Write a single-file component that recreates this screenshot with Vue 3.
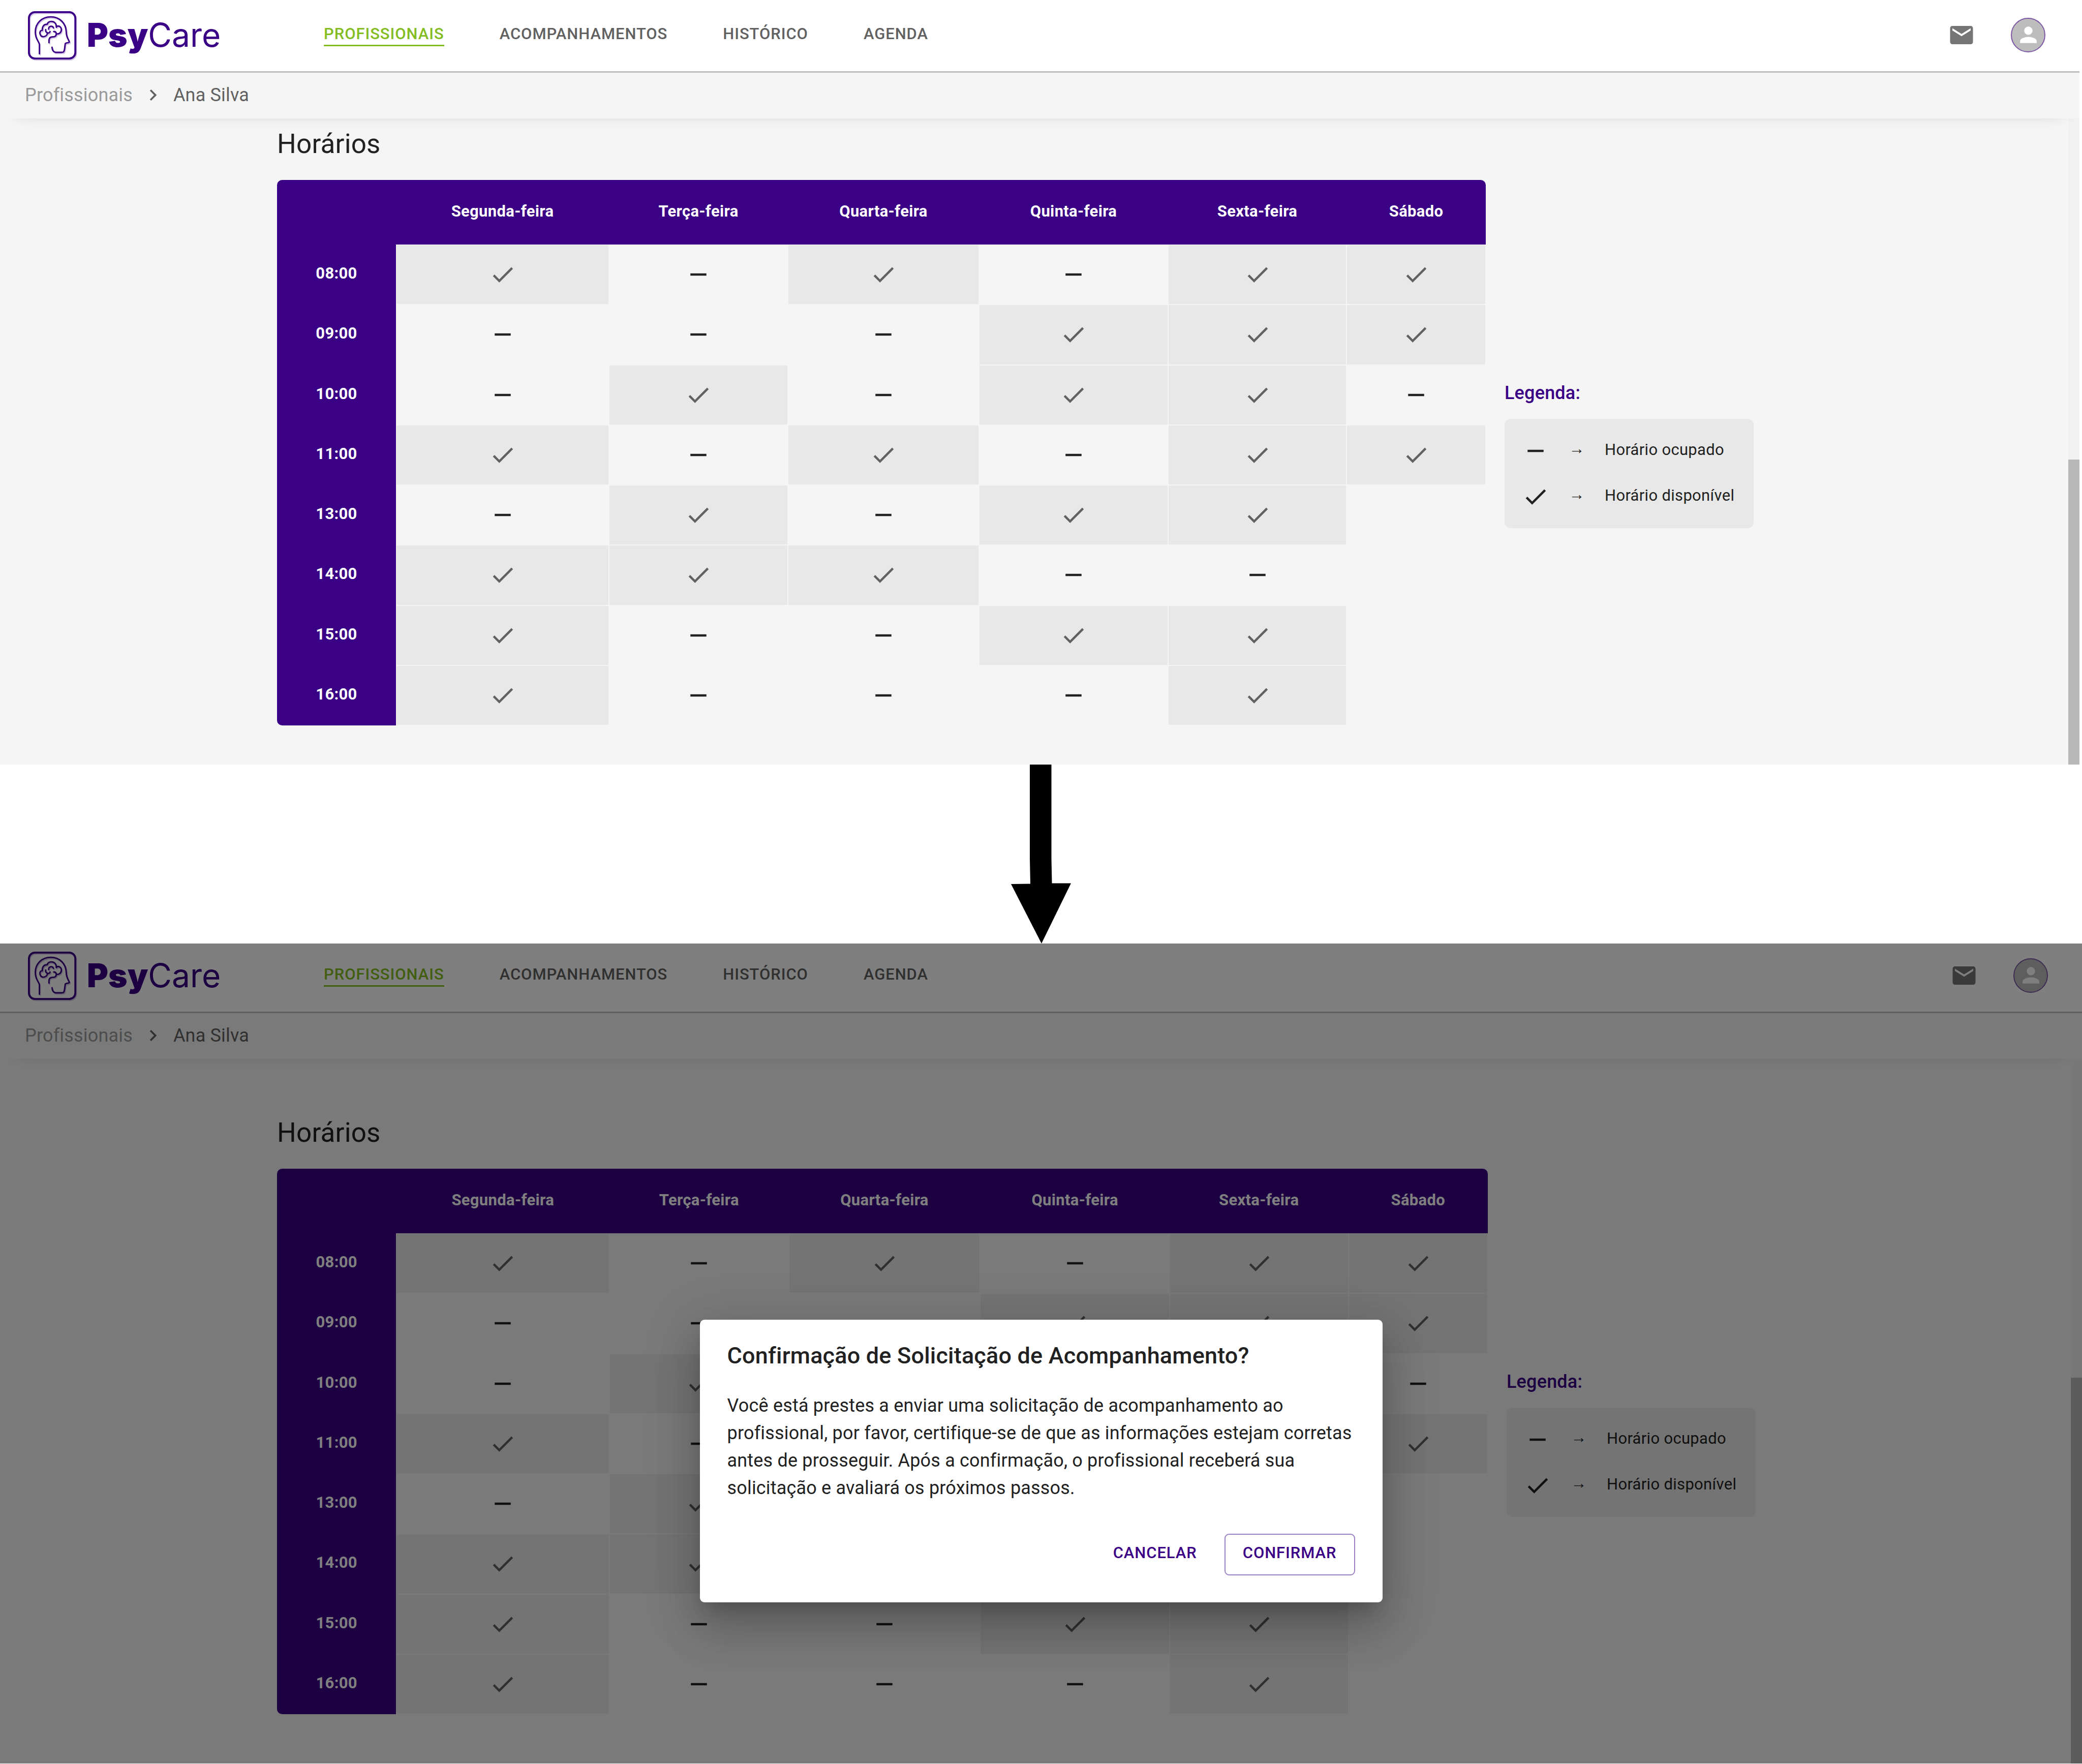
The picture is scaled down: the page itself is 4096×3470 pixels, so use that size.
<script setup>
const days = ['Segunda-feira', 'Terça-feira', 'Quarta-feira', 'Quinta-feira', 'Sexta-feira', 'Sábado']

// x = horário disponível, - = horário ocupado, espaço = sem atendimento
const schedule = [
  { hour: '08:00', slots: 'x-x-xx' },
  { hour: '09:00', slots: '---xxx' },
  { hour: '10:00', slots: '-x-xx-' },
  { hour: '11:00', slots: 'x-x-xx' },
  { hour: '13:00', slots: '-x-xx ' },
  { hour: '14:00', slots: 'xxx-- ' },
  { hour: '15:00', slots: 'x--xx ' },
  { hour: '16:00', slots: 'x---x ' },
]

const links = ['Profissionais', 'Acompanhamentos', 'Histórico', 'Agenda']
const screens = [
  { id: 'schedule', modal: false },
  { id: 'confirm', modal: true },
]
</script>

<template>
  <div class="flow">
    <template v-for="screen in screens" :key="screen.id">
      <div v-if="screen.modal" class="step">
        <svg class="step-arrow" viewBox="0 0 118 352" aria-hidden="true">
          <path d="M37 0H79.500V185L80.500 233.500L118 233.500L60 352L0 235L38 234.500L37 185Z" />
        </svg>
      </div>

      <section class="screen" :class="screen.id">
        <header class="topbar">
          <a class="brand" href="#" aria-label="PsyCare">
            <svg class="brand-mark" viewBox="0 0 450 450" fill="none" stroke-linecap="round" stroke-linejoin="round" aria-hidden="true">
              <defs>
                <g :id="screen.id + '-mark'">
                  <rect x="29" y="37" width="384" height="384" rx="50" stroke-width="16" />
                  <g stroke-width="12">
                    <path d="M116 382V304C114 282 82 262 82 202C82 128 136 76 210 76C284 76 336 130 338 202C338 244 356 262 364 284C360 294 334 288 330 298C324 322 328 348 316 366C312 370 306 370 298 370H250C232 368 222 350 220 328" />
                    <path d="M195 290V268C197 248 210 242 226 242C246 242 256 232 256 214C254 202 244 196 234 198" />
                    <path d="M256 218C282 220 298 204 298 180C296 160 280 148 260 154L256 162C258 132 240 114 214 114C196 114 184 124 180 138C156 136 138 154 140 188C124 186 118 202 120 214C124 232 136 242 152 240C168 238 182 226 182 208C170 204 166 194 168 182" />
                    <path d="M182 210C192 212 202 208 204 198" />
                    <path d="M192 178C192 148 226 148 232 168" />
                  </g>
                </g>
              </defs>
              <use class="mark-shade" :href="'#' + screen.id + '-mark'" x="6" y="9" />
              <use class="mark-line" :href="'#' + screen.id + '-mark'" />
            </svg>
            <span class="brand-name"><b>Psy</b>Care</span>
          </a>
          <nav class="menu">
            <a v-for="(link, i) in links" :key="link" href="#" :class="{ active: i === 0 }">{{ link }}</a>
          </nav>
          <div class="tools">
            <button class="icon-button" type="button" aria-label="Mensagens">
              <svg class="icon" viewBox="0 0 24 24"><path d="M20 4H4c-1.100 0-1.990.9-1.990 2L2 18c0 1.100.9 2 2 2h16c1.100 0 2-.9 2-2V6c0-1.100-.9-2-2-2zm0 4-8 5-8-5V6l8 5 8-5v2z" /></svg>
            </button>
            <button class="avatar" type="button" aria-label="Perfil">
              <svg viewBox="0 0 24 24"><path d="M12 12c2.210 0 4-1.790 4-4s-1.790-4-4-4-4 1.790-4 4 1.790 4 4 4zm0 2c-2.670 0-8 1.340-8 4v2h16v-2c0-2.660-5.330-4-8-4z" /></svg>
            </button>
          </div>
        </header>

        <nav class="crumbs" aria-label="Trilha">
          <a href="#">Profissionais</a>
          <svg viewBox="0 0 24 24" aria-hidden="true"><path d="M10 6 8.590 7.410 13.170 12l-4.580 4.590L10 18l6-6z" /></svg>
          <span>Ana Silva</span>
        </nav>

        <div class="body">
          <main class="content">
            <h2>Horários</h2>
            <div class="board">
              <table>
                <colgroup>
                  <col class="c-hour" /><col class="c-mon" /><col class="c-tue" /><col class="c-wed" />
                  <col class="c-thu" /><col class="c-fri" /><col class="c-sat" />
                </colgroup>
                <thead>
                  <tr>
                    <td class="corner"></td>
                    <th v-for="day in days" :key="day" scope="col">{{ day }}</th>
                  </tr>
                </thead>
                <tbody>
                  <tr v-for="row in schedule" :key="row.hour">
                    <th scope="row">{{ row.hour }}</th>
                    <td v-for="(slot, i) in row.slots" :key="i" :class="{ free: slot === 'x' }">
                      <svg v-if="slot === 'x'" class="icon" viewBox="0 0 24 24"><path d="M9 16.170 4.830 12l-1.420 1.410L9 19 21 7l-1.410-1.410z" /></svg>
                      <svg v-else-if="slot === '-'" class="icon" viewBox="0 0 24 24"><path d="M19 13H5v-2h14v2z" /></svg>
                    </td>
                  </tr>
                </tbody>
              </table>

              <aside class="legend">
                <h3>Legenda:</h3>
                <ul>
                  <li>
                    <svg class="icon" viewBox="0 0 24 24"><path d="M19 13H5v-2h14v2z" /></svg>
                    <span class="to">→</span>
                    <span>Horário ocupado</span>
                  </li>
                  <li>
                    <svg class="icon" viewBox="0 0 24 24"><path d="M9 16.170 4.830 12l-1.420 1.410L9 19 21 7l-1.410-1.410z" /></svg>
                    <span class="to">→</span>
                    <span>Horário disponível</span>
                  </li>
                </ul>
              </aside>
            </div>
          </main>
          <div class="scrollbar"><div class="thumb"></div></div>
        </div>

        <div v-if="screen.modal" class="overlay">
          <div class="dialog" role="dialog" aria-labelledby="dialog-title">
            <h2 id="dialog-title">Confirmação de Solicitação de Acompanhamento?</h2>
            <p>
              Você está prestes a enviar uma solicitação de acompanhamento ao profissional, por favor,
              certifique-se de que as informações estejam corretas antes de prosseguir. Após a confirmação,
              o profissional receberá sua solicitação e avaliará os próximos passos.
            </p>
            <div class="actions">
              <button type="button" class="btn">Cancelar</button>
              <button type="button" class="btn outlined">Confirmar</button>
            </div>
          </div>
        </div>
      </section>
    </template>
  </div>
</template>

<style>
body {
  margin: 0;
  background: #fff;
}
</style>

<style scoped>
.flow {
  font-family: Roboto, "Liberation Sans", sans-serif;
  font-size: 36px;
  letter-spacing: 0.005em;
  color: #212121;
}

h2,
h3,
p,
ul {
  margin: 0;
  padding: 0;
}

a {
  color: inherit;
  text-decoration: none;
}

button {
  font: inherit;
  letter-spacing: inherit;
  color: inherit;
  background: none;
  border: 0;
  padding: 0;
}

svg {
  display: block;
  fill: currentColor;
}

.icon {
  width: 54px;
  height: 54px;
}

.step {
  display: flex;
  justify-content: center;
}

.step-arrow {
  width: 118px;
  height: 352px;
  fill: #000;
}

.screen {
  position: relative;
  overflow: hidden;
  background: #f5f5f5;
}

.schedule {
  margin-right: 5px;
}

.confirm {
  margin-bottom: 1px;
}

/* Barra superior */
.topbar {
  box-sizing: border-box;
  height: 143px;
  padding: 0 67px 3px 50px;
  display: flex;
  align-items: center;
  background: #fff;
  border-bottom: 3px solid #bdbdbd;
}

.confirm .topbar {
  margin-top: -6px;
}

.brand {
  flex: 0 0 587px;
  display: flex;
  align-items: center;
  gap: 14px;
  color: #3a0085;
}

.brand-mark {
  width: 107px;
  height: 107px;
  fill: none;
}

.mark-line {
  stroke: #3a0085;
}

.mark-shade {
  stroke: #d3c4e6;
}

.brand-name {
  font-family: Inter, "Open Sans", sans-serif;
  font-size: 64px;
  line-height: 80px;
  letter-spacing: 0;
}

.brand-name b {
  font-weight: 900;
}

.menu {
  flex: 1;
  display: flex;
  gap: 109px;
  font-size: 31px;
  font-weight: 500;
  line-height: 40px;
  letter-spacing: 0.03em;
  text-transform: uppercase;
  color: #616161;
}

.menu a {
  padding-bottom: 1px;
  border-bottom: 3px solid transparent;
}

.menu .active {
  color: #84bd22;
  border-color: #84bd22;
}

.tools {
  display: flex;
  align-items: center;
  gap: 70px;
}

.icon-button {
  color: #757575;
}

.avatar {
  box-sizing: border-box;
  width: 68px;
  height: 68px;
  display: flex;
  align-items: center;
  justify-content: center;
  border: 2px solid #7b57a6;
  border-radius: 50%;
  background: #bdbdbd;
  color: #fff;
}

.avatar svg {
  width: 49px;
  height: 49px;
}

/* Trilha de navegação */
.crumbs {
  position: relative;
  z-index: 1;
  box-sizing: border-box;
  height: 90px;
  padding: 0 49px 3px;
  display: flex;
  align-items: center;
  gap: 18px;
  background: #f5f5f5;
  color: #616161;
  box-shadow: 0 21px 32px -32px rgba(0, 0, 0, 0.22);
}

.crumbs a {
  color: #9a9a9a;
}

.crumbs svg {
  width: 44px;
  height: 44px;
}

/* Conteúdo */
.body {
  display: flex;
}

.content {
  flex: 1;
  padding: 20px 0 76px 545px;
}

.confirm .content {
  padding: 115px 0 97px 545px;
}

.content h2 {
  font-size: 53px;
  font-weight: 400;
  line-height: 60px;
  margin-bottom: 41px;
}

.board {
  display: flex;
  align-items: center;
  gap: 37px;
}

table {
  flex: 0 0 2378px;
  height: 1073px;
  table-layout: fixed;
  border-collapse: separate;
  border-spacing: 0;
  font-size: 31px;
  letter-spacing: 0.01em;
}

.confirm table {
  flex-basis: 2382px;
}

.c-hour { width: 234px; }
.c-mon { width: 419px; }
.c-tue { width: 352px; }
.c-wed { width: 376px; }
.c-thu { width: 372px; }
.c-fri { width: 351px; }
.c-sat { width: 274px; }

thead th,
.corner {
  height: 127px;
  padding: 0 0 4px;
  box-sizing: border-box;
}

th,
.corner {
  background: #3a0085;
  color: #fff;
  font-weight: 700;
  text-align: center;
}

.corner {
  border-top-left-radius: 10px;
}

thead th:last-child {
  border-top-right-radius: 10px;
}

tbody tr:last-child th {
  border-bottom-left-radius: 10px;
}

tbody th {
  padding: 0 0 5px;
}

tbody td {
  padding: 0;
  border: 1px solid #f5f5f5;
}

tbody td .icon {
  margin: 0 auto;
}

.free {
  background: #e8e8e8;
  color: #616161;
}

.legend {
  padding-top: 4px;
}

.legend h3 {
  font-size: 36px;
  font-weight: 500;
  line-height: 54px;
  margin-bottom: 24px;
  color: #3a0085;
}

.legend ul {
  box-sizing: border-box;
  width: 490px;
  height: 215px;
  padding: 18px 34px 0;
  list-style: none;
  border-radius: 12px;
  background: #e8e8e8;
  font-size: 31px;
  letter-spacing: 0.01em;
}

.legend li {
  display: flex;
  align-items: center;
  height: 90px;
}

.legend li span {
  padding-bottom: 5px;
}

.legend .to {
  width: 109px;
  padding-bottom: 9px;
  text-align: center;
}

/* Barra de rolagem */
.scrollbar {
  flex: 0 0 22px;
  background: #f1f1f1;
}

.thumb {
  height: 600px;
  margin-top: 671px;
  background: #b8b8b8;
}

.confirm .thumb {
  height: 759px;
  margin-top: 627px;
}

/* Confirmação */
.overlay {
  position: absolute;
  inset: 0;
  z-index: 2;
  padding-top: 740px;
  display: flex;
  justify-content: center;
  align-items: flex-start;
  background: rgba(0, 0, 0, 0.5);
}

.dialog {
  box-sizing: border-box;
  width: 1343px;
  padding: 36px 54px 53px;
  border-radius: 9px;
  background: #fff;
  box-shadow:
    0 24px 33px -16px rgba(0, 0, 0, 0.2),
    0 53px 84px 7px rgba(0, 0, 0, 0.14),
    0 20px 102px 18px rgba(0, 0, 0, 0.12);
}

.dialog h2 {
  font-size: 45px;
  font-weight: 500;
  line-height: 70px;
  margin-bottom: 36px;
}

.dialog p {
  line-height: 54px;
}

.actions {
  display: flex;
  justify-content: flex-end;
  gap: 18px;
  margin-top: 63px;
}

.btn {
  padding: 11px 34px 17px;
  border: 2px solid transparent;
  border-radius: 9px;
  font-size: 31px;
  font-weight: 500;
  line-height: 50px;
  letter-spacing: 0.03em;
  text-transform: uppercase;
  color: #3a0085;
}

.outlined {
  border-color: #9c7fc2;
}
</style>
